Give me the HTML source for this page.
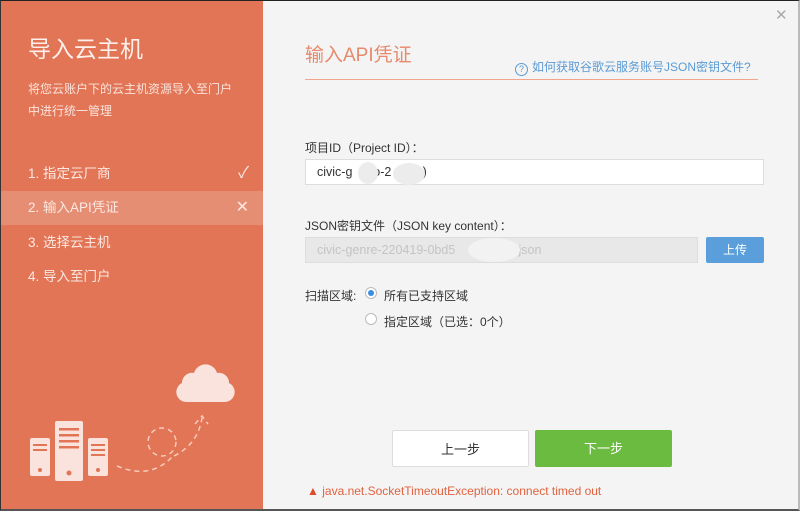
<!DOCTYPE html>
<html><head><meta charset="utf-8"><style>
*{margin:0;padding:0;box-sizing:border-box}
body{width:800px;height:511px;overflow:hidden;background:#f4f4f4;font-family:"Liberation Sans","Noto Sans CJK SC",sans-serif;position:relative}
.frame{position:absolute;left:0;top:0;width:800px;height:511px;border-top:1px solid #222;border-left:1px solid #333;border-right:2px solid #bbb;border-bottom:2px solid #555;pointer-events:none}
.left{position:absolute;left:0;top:0;width:263px;height:511px;background:#e27556;color:#fff}
.t{position:absolute;left:28px;top:30px;font-size:23px;color:#fdf0ec}
.d{position:absolute;left:28px;top:78px;font-size:12px;line-height:22px;color:#fbe3db;width:220px}
.s{position:absolute;left:0;width:263px;height:34px;line-height:34px;padding-left:28px;font-size:13.5px;color:#fbe8e2}
.s.act{background:#e68e74}
.s i{position:absolute;right:14px;top:0;font-style:normal;font-size:16px}
.h{position:absolute;left:305px;top:40px;font-size:19px;color:#e58a6c}
.hl{position:absolute;left:305px;top:79px;width:453px;height:1px;background:#f2a48d}
.help{position:absolute;left:515px;top:58px;font-size:12px;color:#5b9bd5}
.help span{display:inline-block;width:13px;height:13px;border:1px solid #5b9bd5;border-radius:50%;font-size:9px;text-align:center;line-height:11px;margin-right:4px;vertical-align:-1px}
.lbl{position:absolute;left:305px;font-size:12px;color:#333}
.in{position:absolute;left:305px;top:159px;width:459px;height:26px;background:#fff;border:1px solid #ddd;font-size:12.5px;line-height:24px;padding-left:11px;color:#333}
.in2{position:absolute;left:305px;top:237px;width:393px;height:26px;background:#e8e8e8;border:1px solid #ddd;font-size:12.5px;line-height:24px;padding-left:11px;color:#c4c4c4}
.up{position:absolute;left:706px;top:237px;width:58px;height:26px;background:#5a9fdb;color:#fff;font-size:12px;text-align:center;line-height:26px;border-radius:2px}
.blob{position:absolute;background:#ececec;border-radius:50%}
.radio{position:absolute;width:12px;height:12px;border:1px solid #bbb;border-radius:50%;background:#fff}
.radio.on::after{content:"";position:absolute;left:2px;top:2px;width:6px;height:6px;border-radius:50%;background:#3d8ee0}
.btn{position:absolute;top:430px;height:37px;font-size:13px;text-align:center;line-height:37px;border-radius:2px}
.err{position:absolute;left:307px;top:484px;font-size:12px;color:#e0623f}
.x{position:absolute;left:775px;top:6px;font-size:15px;color:#aaa}
</style></head><body>
<div class="left">
<div class="t">导入云主机</div>
<div class="d">将您云账户下的云主机资源导入至门户<br>中进行统一管理</div>
<div class="s" style="top:157px">1. 指定云厂商<i>✓</i></div>
<div class="s act" style="top:191px">2. 输入API凭证<i>✕</i></div>
<div class="s" style="top:226px">3. 选择云主机</div>
<div class="s" style="top:260px">4. 导入至门户</div>
<svg style="position:absolute;left:0;top:340px" width="263" height="171" viewBox="0 0 263 171">
<g fill="#f9e3dc">
<rect x="30" y="98" width="20" height="38" rx="2"/>
<rect x="55" y="81" width="28" height="60" rx="2"/>
<rect x="88" y="98" width="20" height="38" rx="2"/>
<path d="M186 62 a10 10 0 0 1 -4 -19 a10 10 0 0 1 12 -10 a12 12 0 0 1 23 0 a10 10 0 0 1 12 10 a10 10 0 0 1 -4 19 z"/>
</g>
<g fill="#e27556">
<rect x="33" y="104" width="14" height="2"/><rect x="33" y="109" width="14" height="2"/>
<rect x="59" y="88" width="20" height="2.5"/><rect x="59" y="94" width="20" height="2.5"/><rect x="59" y="100" width="20" height="2.5"/><rect x="59" y="106" width="20" height="2.5"/>
<circle cx="69" cy="133" r="2.5"/><circle cx="40" cy="130" r="2"/><circle cx="98" cy="130" r="2"/>
<rect x="91" y="104" width="14" height="2"/><rect x="91" y="109" width="14" height="2"/><rect x="91" y="114" width="14" height="2"/>
</g>
<g fill="none" stroke="#f6cbbd" stroke-width="1.5" stroke-dasharray="5 4">
<path d="M117 126 Q150 140 172 117"/>
<circle cx="162" cy="102" r="14"/>
<path d="M174 116 Q198 104 202 78"/>
<path d="M195 84 L202 76 L208 84"/>
</g>
</svg>
</div>
<div class="x">✕</div>
<div class="h">输入API凭证</div>
<div class="hl"></div>
<div class="help"><span>?</span>如何获取谷歌云服务账号JSON密钥文件?</div>
<div class="lbl" style="top:139px">项目ID（Project ID）：</div>
<div class="in">civic-g&nbsp;&nbsp;&nbsp;&nbsp;&nbsp;&nbsp;o-2&nbsp;&nbsp;&nbsp;&nbsp;&nbsp;&nbsp;&nbsp;&nbsp;&nbsp;)</div>
<div class="blob" style="left:358px;top:162px;width:20px;height:22px"></div>
<div class="blob" style="left:393px;top:163px;width:32px;height:22px"></div>
<div class="lbl" style="top:217px">JSON密钥文件（JSON key content）：</div>
<div class="in2">civic-genre-220419-0bd5&nbsp;&nbsp;&nbsp;&nbsp;&nbsp;&nbsp;&nbsp;&nbsp;&nbsp;&nbsp;&nbsp;&nbsp;&nbsp;&nbsp;&nbsp;&nbsp;).json</div>
<div class="blob" style="left:468px;top:238px;width:52px;height:24px;background:#f2f2f2"></div>
<div class="up">上传</div>
<div class="lbl" style="top:287px">扫描区域:</div>
<div class="radio on" style="left:365px;top:287px"></div>
<div class="lbl" style="left:384px;top:287px">所有已支持区域</div>
<div class="radio" style="left:365px;top:313px"></div>
<div class="lbl" style="left:384px;top:313px">指定区域（已选：0个）</div>
<div class="btn" style="left:392px;width:137px;background:#fff;border:1px solid #ddd;color:#333">上一步</div>
<div class="btn" style="left:535px;width:137px;background:#6abb3f;color:#fff">下一步</div>
<div class="err"><span style="color:#e04a2a">▲</span> java.net.SocketTimeoutException: connect timed out</div>
<div class="frame"></div>
</body></html>
